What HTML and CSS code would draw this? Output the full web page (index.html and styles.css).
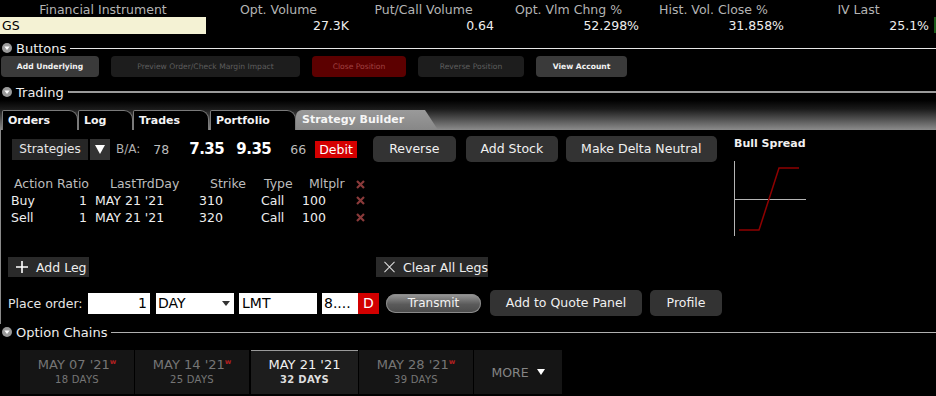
FILE: index.html
```html
<!DOCTYPE html>
<html>
<head>
<meta charset="utf-8">
<link rel="stylesheet" href="styles.css">
</head>
<body>
<div class="quote">
  <div class="qcol first"><div class="qh">Financial Instrument</div><div class="sym">GS</div></div>
  <div class="qcol"><div class="qh">Opt. Volume</div><div class="qv">27.3K</div></div>
  <div class="qcol"><div class="qh">Put/Call Volume</div><div class="qv">0.64</div></div>
  <div class="qcol"><div class="qh">Opt. Vlm Chng %</div><div class="qv">52.298%</div></div>
  <div class="qcol"><div class="qh">Hist. Vol. Close %</div><div class="qv">31.858%</div></div>
  <div class="qcol"><div class="qh">IV Last</div><div class="qv">25.1%</div></div>
  <div class="greenbar"></div>
</div>

<div class="section s-buttons">
  <svg class="disc" width="10" height="10" viewBox="0 0 10 10"><circle cx="5" cy="5" r="5" fill="#9a9a9a"/><path d="M2.4 3.6 H7.6 L5 7 Z" fill="#fff"/></svg>
  <span class="stitle">Buttons</span><span class="sline white"></span>
</div>
<div class="btnrow">
  <div class="sbtn on w1">Add Underlying</div>
  <div class="sbtn off w2">Preview Order/Check Margin Impact</div>
  <div class="sbtn red w3">Close Position</div>
  <div class="sbtn off w4">Reverse Position</div>
  <div class="sbtn on w5">View Account</div>
</div>

<div class="section s-trading">
  <svg class="disc" width="10" height="10" viewBox="0 0 10 10"><circle cx="5" cy="5" r="5" fill="#9a9a9a"/><path d="M2.4 3.6 H7.6 L5 7 Z" fill="#fff"/></svg>
  <span class="stitle">Trading</span><span class="sline grey"></span>
</div>
<div class="tabstrip">
  <div class="tab t1">Orders</div>
  <div class="tab t2">Log</div>
  <div class="tab t3">Trades</div>
  <div class="tab t4">Portfolio</div>
  <div class="tab active">Strategy Builder</div>
</div>

<div class="panel">
  <div class="upper">
    <div class="main">
      <div class="stratrow">
        <div class="strat">Strategies</div>
        <div class="dd"><svg width="10" height="9" viewBox="0 0 10 9"><path d="M0 0H10L5 9Z" fill="#fff"/></svg></div>
        <span class="ba">B/A:</span>
        <span class="sz s78">78</span>
        <span class="px p1">7.35</span>
        <span class="px p2">9.35</span>
        <span class="sz s66">66</span>
        <span class="debit">Debit</span>
        <div class="gbtn b-rev">Reverse</div>
        <div class="gbtn b-stk">Add Stock</div>
        <div class="gbtn b-dn">Make Delta Neutral</div>
      </div>
      <div class="legs">
        <div class="lrow head">
          <span class="c1">Action</span><span class="c2">Ratio</span><span class="c3">LastTrdDay</span><span class="c4">Strike</span><span class="c5">Type</span><span class="c6">Mltplr</span><span class="c7"><svg width="9" height="9" viewBox="0 0 9 9"><path d="M1 1L8 8M8 1L1 8" stroke="#8a3a3a" stroke-width="2.2"/></svg></span>
        </div>
        <div class="lrow">
          <span class="c1">Buy</span><span class="c2">1</span><span class="c3">MAY 21 '21</span><span class="c4">310</span><span class="c5">Call</span><span class="c6">100</span><span class="c7"><svg width="9" height="9" viewBox="0 0 9 9"><path d="M1 1L8 8M8 1L1 8" stroke="#8a3a3a" stroke-width="2.2"/></svg></span>
        </div>
        <div class="lrow">
          <span class="c1">Sell</span><span class="c2">1</span><span class="c3">MAY 21 '21</span><span class="c4">320</span><span class="c5">Call</span><span class="c6">100</span><span class="c7"><svg width="9" height="9" viewBox="0 0 9 9"><path d="M1 1L8 8M8 1L1 8" stroke="#8a3a3a" stroke-width="2.2"/></svg></span>
        </div>
      </div>
      <div class="legbtns">
        <div class="lbtn addleg"><svg width="12" height="12" viewBox="0 0 12 12"><path d="M6 0V12M0 6H12" stroke="#fff" stroke-width="1.6"/></svg>Add Leg</div>
        <div class="lbtn clear"><svg width="12" height="12" viewBox="0 0 12 12"><path d="M0.5 0.5L11.5 11.5M11.5 0.5L0.5 11.5" stroke="#ddd" stroke-width="1.1"/></svg>Clear All Legs</div>
      </div>
    </div>
    <div class="side">
      <div class="stitle2">Bull Spread</div>
      <svg class="chart" width="74" height="76" viewBox="0 0 74 76">
        <path d="M0.5 0V75" stroke="#b5b5b5" stroke-width="1"/>
        <path d="M0 38.5H72" stroke="#b5b5b5" stroke-width="1"/>
        <path d="M5 69H25L45 7H65" fill="none" stroke="#8e0000" stroke-width="1.5"/>
      </svg>
    </div>
  </div>
  <div class="orderrow">
    <span class="pl">Place order:</span>
    <div class="fld qty">1</div>
    <div class="fld tif">DAY<svg width="8" height="5" viewBox="0 0 8 5"><path d="M0 0H8L4 5Z" fill="#333"/></svg></div>
    <div class="fld typ">LMT</div>
    <div class="fld lim">8....</div><div class="dbox">D</div>
    <div class="transmit">Transmit</div>
    <div class="gbtn b-aq">Add to Quote Panel</div>
    <div class="gbtn b-pr">Profile</div>
  </div>
</div>

<div class="section s-chains">
  <svg class="disc" width="10" height="10" viewBox="0 0 10 10"><circle cx="5" cy="5" r="5" fill="#9a9a9a"/><path d="M2.4 3.6 H7.6 L5 7 Z" fill="#fff"/></svg>
  <span class="stitle">Option Chains</span><span class="sline lgrey"></span>
</div>
<div class="exps">
  <div class="exp e1"><div class="ed">MAY 07 '21<sup>w</sup></div><div class="edays">18 DAYS</div></div>
  <div class="exp e2"><div class="ed">MAY 14 '21<sup>w</sup></div><div class="edays">25 DAYS</div></div>
  <div class="exp e3 cur"><div class="ed">MAY 21 '21</div><div class="edays">32 DAYS</div></div>
  <div class="exp e4"><div class="ed">MAY 28 '21<sup>w</sup></div><div class="edays">39 DAYS</div></div>
  <div class="exp more">MORE<svg width="8" height="6" viewBox="0 0 8 6"><path d="M0 0H8L4 6Z" fill="#fff"/></svg></div>
</div>
</body>
</html>
```
FILE: styles.css
```css
html, body {
  margin: 0;
  padding: 0;
  background: #000;
  color: #eee;
  font-family: "DejaVu Sans", "Liberation Sans", sans-serif;
  font-size: 12px;
  width: 936px;
  height: 396px;
  overflow: hidden;
}

/* quote header */
.quote {
  display: flex;
  height: 35px;
}
.qcol {
  width: 145px;
  display: flex;
  flex-direction: column;
}
.qcol.first { width: 206px; }
.qh {
  height: 17px;
  line-height: 20px;
  text-align: center;
  color: #b4b4b4;
  font-size: 12.5px;
  white-space: nowrap;
}
.sym {
  height: 17px;
  background: #f4f2d4;
  color: #000;
  line-height: 18px;
  padding-left: 2px;
  font-size: 12.5px;
}
.qv {
  height: 18px;
  line-height: 18px;
  text-align: right;
  padding-right: 2px;
  color: #eee;
  font-size: 12.5px;
}
.greenbar {
  width: 2px;
  height: 16px;
  margin-top: 17px;
  margin-left: 3px;
  background: #1a5a1a;
}

/* section headers */
.section {
  display: flex;
  align-items: center;
  height: 16px;
  padding-left: 2px;
}
.s-buttons { margin-top: 5px; }
.s-trading { margin-top: 7px; }
.s-chains { margin-top: 0; }
.disc { flex: none; margin-right: 4px; }
.stitle {
  font-size: 13px;
  color: #eee;
  white-space: nowrap;
}
.sline {
  flex: 1;
  height: 1px;
  margin-left: 4px;
}
.sline.white { background: #e6e6e6; }
.sline.grey { background: #9a9a9a; height: 2px; }
.sline.lgrey { background: #b0b0b0; }

/* small buttons row */
.btnrow {
  display: flex;
  gap: 12px;
  padding-left: 1px;
  height: 21px;
}
.sbtn {
  height: 21px;
  line-height: 21px;
  border-radius: 4px;
  text-align: center;
  font-size: 7.6px;
  white-space: nowrap;
}
.sbtn.on { background: #3a3a3a; color: #f2f2f2; font-weight: bold; }
.sbtn.off { background: #1d1d1d; color: #5e5e5e; }
.sbtn.red { background: #5c0000; color: #a04040; }
.w1 { width: 98px; }
.w2 { width: 189px; }
.w3 { width: 94px; }
.w4 { width: 106px; }
.w5 { width: 91px; }

/* trading tabs */
.tabstrip {
  height: 30px;
  background: linear-gradient(#000 0%, #1a1a1a 30%, #8c8c8c 100%);
  display: flex;
  align-items: flex-end;
  padding-left: 2px;
}
.tab {
  height: 19px;
  line-height: 19px;
  background: #000;
  border: 1px solid #7a7a7a;
  border-bottom: none;
  border-radius: 2px 9px 0 0;
  font-weight: bold;
  font-size: 11px;
  color: #f4f4f4;
  padding-left: 5px;
  box-sizing: content-box;
}
.t1 { width: 69px; }
.t2 { width: 48px; }
.t3 { width: 69px; }
.t4 { width: 79px; margin-left: 1px; }
.tab.active {
  width: 136px;
  padding-left: 6px;
  border: none;
  height: 20px;
  background: linear-gradient(#9a9a9a, #878787);
  clip-path: polygon(0 0, 129px 0, 142px 100%, 0 100%);
  border-radius: 6px 0 0 0;
  color: #f6f6f6;
}

/* panel */
.panel {
  border-left: 1px solid #8a8a8a;
  height: 194px;
}
.upper {
  display: flex;
  height: 160px;
}
.main { width: 733px; }
.side { padding-top: 6px; }
.stitle2 {
  font-weight: bold;
  font-size: 11px;
  color: #f0f0f0;
  line-height: 16px;
}
.chart { display: block; margin-top: 9px; }

.stratrow {
  display: flex;
  align-items: center;
  height: 26px;
  margin-top: 6px;
  padding-left: 11px;
}
.strat {
  width: 76px;
  height: 21px;
  line-height: 21px;
  background: #262626;
  text-align: center;
  color: #e6e6e6;
  font-size: 12px;
}
.dd {
  width: 20px;
  height: 21px;
  margin-left: 2px;
  background: #333;
  display: flex;
  align-items: center;
  justify-content: center;
}
.ba { margin-left: 6px; color: #b0b0b0; font-size: 12px; }
.sz { color: #bbb; font-size: 12.5px; }
.s78 { margin-left: 13px; }
.px { font-weight: bold; font-size: 15px; letter-spacing: -0.5px; color: #fff; }
.p1 { margin-left: 20px; }
.p2 { margin-left: 12px; }
.s66 { margin-left: 19px; }
.debit {
  margin-left: 9px;
  background: #d40000;
  color: #fff;
  font-size: 12.5px;
  height: 17px;
  line-height: 17px;
  padding: 0 4px;
}
.gbtn {
  height: 26px;
  line-height: 26px;
  border-radius: 5px;
  background: #333;
  color: #f0f0f0;
  text-align: center;
  font-size: 12.5px;
  white-space: nowrap;
}
.b-rev { width: 83px; margin-left: 16px; }
.b-stk { width: 92px; margin-left: 10px; }
.b-dn { width: 151px; margin-left: 8px; }

.legs { margin-top: 14px; }
.lrow {
  display: grid;
  grid-template-columns: 44px 35px 105px 60px 47px 50px 20px;
  height: 17px;
  line-height: 17px;
  padding-left: 10px;
  font-size: 12.5px;
  color: #eee;
  white-space: nowrap;
}
.lrow.head { color: #bdbdbd; height: 16px; line-height: 16px; }
.c2 { text-align: right; padding-right: 3px; }
.head .c1 { padding-left: 3px; }
.head .c2 { padding-right: 1px; }
.c3 { padding-left: 5px; }
.head .c3 { padding-left: 20px; }
.c4 { padding-left: 4px; }
.head .c4 { padding-left: 15px; }
.c5 { padding-left: 6px; }
.head .c5 { padding-left: 9px; }
.c6 { padding-left: 0; }
.head .c6 { padding-left: 7px; }
.c7 { padding-left: 4px; display: flex; align-items: center; }

.legbtns {
  display: flex;
  margin-top: 31px;
  padding-left: 7px;
}
.lbtn {
  height: 20px;
  background: #2a2a2a;
  display: flex;
  align-items: center;
  font-size: 12.5px;
  color: #eee;
  white-space: nowrap;
}
.lbtn svg { margin-right: 8px; }
.addleg { width: 81px; padding-left: 8px; box-sizing: border-box; }
.clear { width: 112px; padding-left: 8px; box-sizing: border-box; margin-left: 287px; }

.orderrow {
  display: flex;
  align-items: center;
  height: 26px;
  padding-left: 7px;
}
.pl { color: #e6e6e6; font-size: 12.5px; width: 80px; }
.fld {
  height: 21px;
  line-height: 21px;
  background: #fff;
  color: #000;
  font-size: 14px;
  box-sizing: border-box;
}
.qty { width: 62px; text-align: right; padding-right: 3px; }
.tif { width: 78px; margin-left: 6px; padding-left: 2px; display: flex; align-items: center; justify-content: space-between; padding-right: 4px; }
.typ { width: 78px; margin-left: 5px; padding-left: 3px; }
.lim { width: 36px; margin-left: 5px; padding-left: 2px; }
.dbox {
  width: 21px;
  height: 21px;
  line-height: 21px;
  background: #d20000;
  color: #fff;
  text-align: center;
  font-size: 14px;
}
.transmit {
  width: 95px;
  height: 19px;
  line-height: 19px;
  margin-left: 7px;
  border-radius: 10px;
  background: linear-gradient(#9a9a9a, #5a5a5a 55%, #4a4a4a);
  box-shadow: inset 0 0 0 1px #8a8a8a;
  color: #f4f4f4;
  text-align: center;
  font-size: 12px;
}
.b-aq { width: 152px; margin-left: 9px; }
.b-pr { width: 72px; margin-left: 8px; }

/* expiries */
.exps {
  display: flex;
  margin-top: 10px;
  padding-left: 20px;
  gap: 1px;
}
.exp {
  height: 44px;
  background: #151515;
  text-align: center;
  color: #767676;
  box-sizing: border-box;
  padding-top: 7px;
}
.e1 { width: 114px; }
.e2 { width: 114px; }
.e3 { width: 107px; margin-left: 1px; }
.e4 { width: 114px; }
.exp.cur {
  background: #1d1d1d;
  border-top: 1px solid #9a9a9a;
  color: #f0f0f0;
  padding-top: 6px;
}
.ed { font-size: 13px; line-height: 16px; white-space: nowrap; }
.ed sup { font-size: 7px; color: #b02020; vertical-align: 5px; line-height: 0; font-weight: bold; }
.edays { font-size: 10px; line-height: 14px; letter-spacing: 0.3px; }
.cur .edays { color: #ddd; font-weight: bold; }
.exp.more {
  width: 88px;
  display: flex;
  align-items: center;
  justify-content: center;
  padding-top: 0;
  font-size: 12.5px;
  color: #858585;
  gap: 8px;
}
```
